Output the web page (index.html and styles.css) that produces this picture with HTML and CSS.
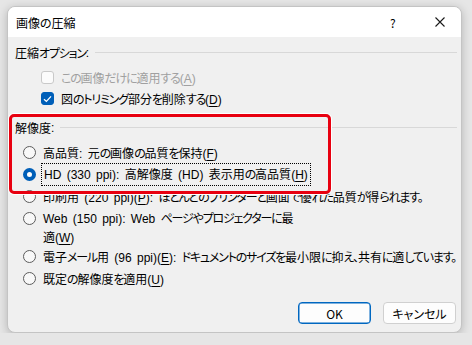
FILE: index.html
```html
<!DOCTYPE html>
<html lang="ja">
<head>
    <meta charset="UTF-8">
    <title>画像の圧縮</title>
    <link rel="stylesheet" href="styles.css">
</head>
<body>
    <div class="dialog">
        <div class="title-bar">
            <span class="title">画像の圧縮</span>
            <span class="help">?</span>
            <span class="close">
                <svg width="10" height="10" viewBox="0 0 10 10"><path d="M0.5 0.5 L9.5 9.5 M9.5 0.5 L0.5 9.5" stroke="#1a1a1a" stroke-width="1.1" fill="none"/></svg>
            </span>
        </div>

        <div class="dialog-body">
            <div class="group-title">圧縮<span class="kana">オプション</span><span class="lat">:</span></div>
            <div class="checks">
                <label class="check-row disabled">
                    <span class="checkbox"></span>
                    <span><span class="kana">この</span>画像<span class="kana">だけに</span>適用<span class="kana">する</span><span class="lat">(<u>A</u>)</span></span>
                </label>
                <label class="check-row">
                    <span class="checkbox checked">
                        <svg width="9" height="8" viewBox="0 0 9 8"><path d="M1 4.2 L3.4 6.4 L8 1.4" stroke="#fff" stroke-width="1.3" fill="none"/></svg>
                    </span>
                    <span>図<span class="kana">のトリミング</span>部分<span class="kana">を</span>削除<span class="kana">する</span><span class="lat">(<u>D</u>)</span></span>
                </label>
            </div>

            <div class="group-title second">解像度<span class="lat">:</span></div>
            <div class="radios">
                <div class="radio-row">
                    <span class="radio"></span>
                    <span>高品質<span class="lat">: </span>元<span class="kana">の</span>画像<span class="kana">の</span>品質<span class="kana">を</span>保持<span class="lat">(<u>F</u>)</span></span>
                </div>
                <div class="radio-row">
                    <span class="radio checked"></span>
                    <span class="focused"><span class="lat">HD (330 ppi): </span>高解像度<span class="lat"> (HD) </span>表示用<span class="kana">の</span>高品質<span class="lat">(<u>H</u>)</span></span>
                </div>
                <div class="radio-row">
                    <span class="radio"></span>
                    <span>印刷用<span class="lat"> (220 ppi)(<u>P</u>): </span><span class="kana">ほとんどのプリンターと</span>画面<span class="kana">で</span>優<span class="kana">れた</span>品質<span class="kana">が</span>得<span class="kana">られます。</span></span>
                </div>
                <div class="radio-row tall">
                    <span class="radio"></span>
                    <span><span class="lat">Web (150 ppi): Web </span><span class="kana">ページやプロジェクターに</span>最<br>適<span class="lat">(<u>W</u>)</span></span>
                </div>
                <div class="radio-row">
                    <span class="radio"></span>
                    <span>電子<span class="kana">メール</span>用<span class="lat"> (96 ppi)(<u>E</u>): </span><span class="kana">ドキュメントのサイズを</span>最小限<span class="kana">に</span>抑<span class="kana">え、</span>共有<span class="kana">に</span>適<span class="kana">しています。</span></span>
                </div>
                <div class="radio-row">
                    <span class="radio"></span>
                    <span>既定<span class="kana">の</span>解像度<span class="kana">を</span>適用<span class="lat">(<u>U</u>)</span></span>
                </div>
            </div>
        </div>

        <div class="dialog-footer">
            <button class="btn default">OK</button>
            <button class="btn">キャンセル</button>
        </div>

        <div class="highlight"></div>
    </div>
</body>
</html>
```

FILE: styles.css
```css
:root {
    --accent: #005fb8;
    --body-bg: #f0f0f0;
    --line: #d8d8d8;
}

body {
    margin: 0;
    background-color: #e6e6e6;
    font-family: "Noto Sans CJK JP", sans-serif;
    font-size: 12px;
    font-feature-settings: "palt";
    color: #000;
}

.dialog {
    position: relative;
    margin: 6px 0 0 7px;
    width: 455px;
    height: 327px;
    box-sizing: border-box;
    background-color: var(--body-bg);
    border: 1px solid #c4c4c4;
    border-radius: 8px;
    box-shadow: 0 2px 10px rgba(0, 0, 0, 0.22);
    display: flex;
    flex-direction: column;
    overflow: hidden;
}

.title-bar {
    height: 30px;
    background-color: #fff;
    display: flex;
    align-items: center;
    padding-left: 8px;
}

.title {
    flex: 1;
    padding-top: 1px;
}

.help {
    width: 12px;
    margin-right: 33px;
}

.close {
    display: flex;
    margin-right: 16px;
}

.dialog-body {
    padding: 5px 4px 0 7px;
}

/* kana are narrower in the system UI font */
.kana {
    letter-spacing: -1.2px;
}

.lat {
    font-family: "Liberation Sans", Arial, sans-serif;
    word-spacing: 2px;
}

.group-title {
    height: 22px;
    line-height: 22px;
    display: flex;
    align-items: center;
    white-space: nowrap;
}

.group-title::after {
    content: "";
    flex: 1;
    height: 1px;
    background-color: var(--line);
    margin-left: 6px;
    margin-top: -1px;
}

.group-title.second {
    margin-top: 8px;
}

.checks {
    margin-top: 3px;
    padding-left: 26px;
}

.check-row {
    height: 21px;
    display: flex;
    align-items: center;
    gap: 7px;
}

.check-row.disabled {
    color: #a0a0a0;
}

.checkbox {
    width: 13px;
    height: 13px;
    box-sizing: border-box;
    border: 1px solid #c9c9c9;
    border-radius: 3px;
    background-color: #fbfbfb;
    display: flex;
    align-items: center;
    justify-content: center;
}

.checkbox.checked {
    background-color: var(--accent);
    border-color: var(--accent);
}

.radios {
    margin-top: 2px;
    padding-left: 8px;
}

.radio-row {
    height: 22px;
    display: flex;
    align-items: center;
    gap: 7px;
    white-space: nowrap;
}

.radio-row.tall {
    height: 38px;
    align-items: flex-start;
    padding-top: 2px;
    box-sizing: border-box;
    line-height: 18px;
}

.radio-row.tall .radio {
    margin-top: 3px;
}

.radio {
    width: 13px;
    height: 13px;
    flex: none;
    box-sizing: border-box;
    border: 1px solid #5c5c5c;
    border-radius: 50%;
    background-color: #f8f8f8;
}

.radio.checked {
    border: 4px solid var(--accent);
    background-color: #fff;
}

.focused {
    outline: 1px dotted #000;
    outline-offset: 1px;
    padding: 0 1px;
    line-height: 18px;
}

u {
    text-underline-offset: 2px;
}

.dialog-footer {
    margin-top: auto;
    padding: 0 5px 8px 0;
    display: flex;
    justify-content: flex-end;
    gap: 12px;
}

.btn {
    width: 73px;
    height: 22px;
    box-sizing: border-box;
    background-color: #fdfdfd;
    border: 1px solid #d0d0d0;
    border-radius: 4px;
    font-family: inherit;
    font-size: 12px;
    font-feature-settings: "palt";
    color: #000;
    padding: 0;
}

.btn.default {
    border: 1px solid #0067c0;
    box-shadow: inset 0 0 0 0.5px #0067c0;
}

.highlight {
    position: absolute;
    left: 1px;
    top: 107px;
    width: 322px;
    height: 80px;
    box-sizing: border-box;
    border: 3px solid #e80010;
    border-radius: 5px;
    box-shadow: 0 0 0 1px #fff;
}
```
